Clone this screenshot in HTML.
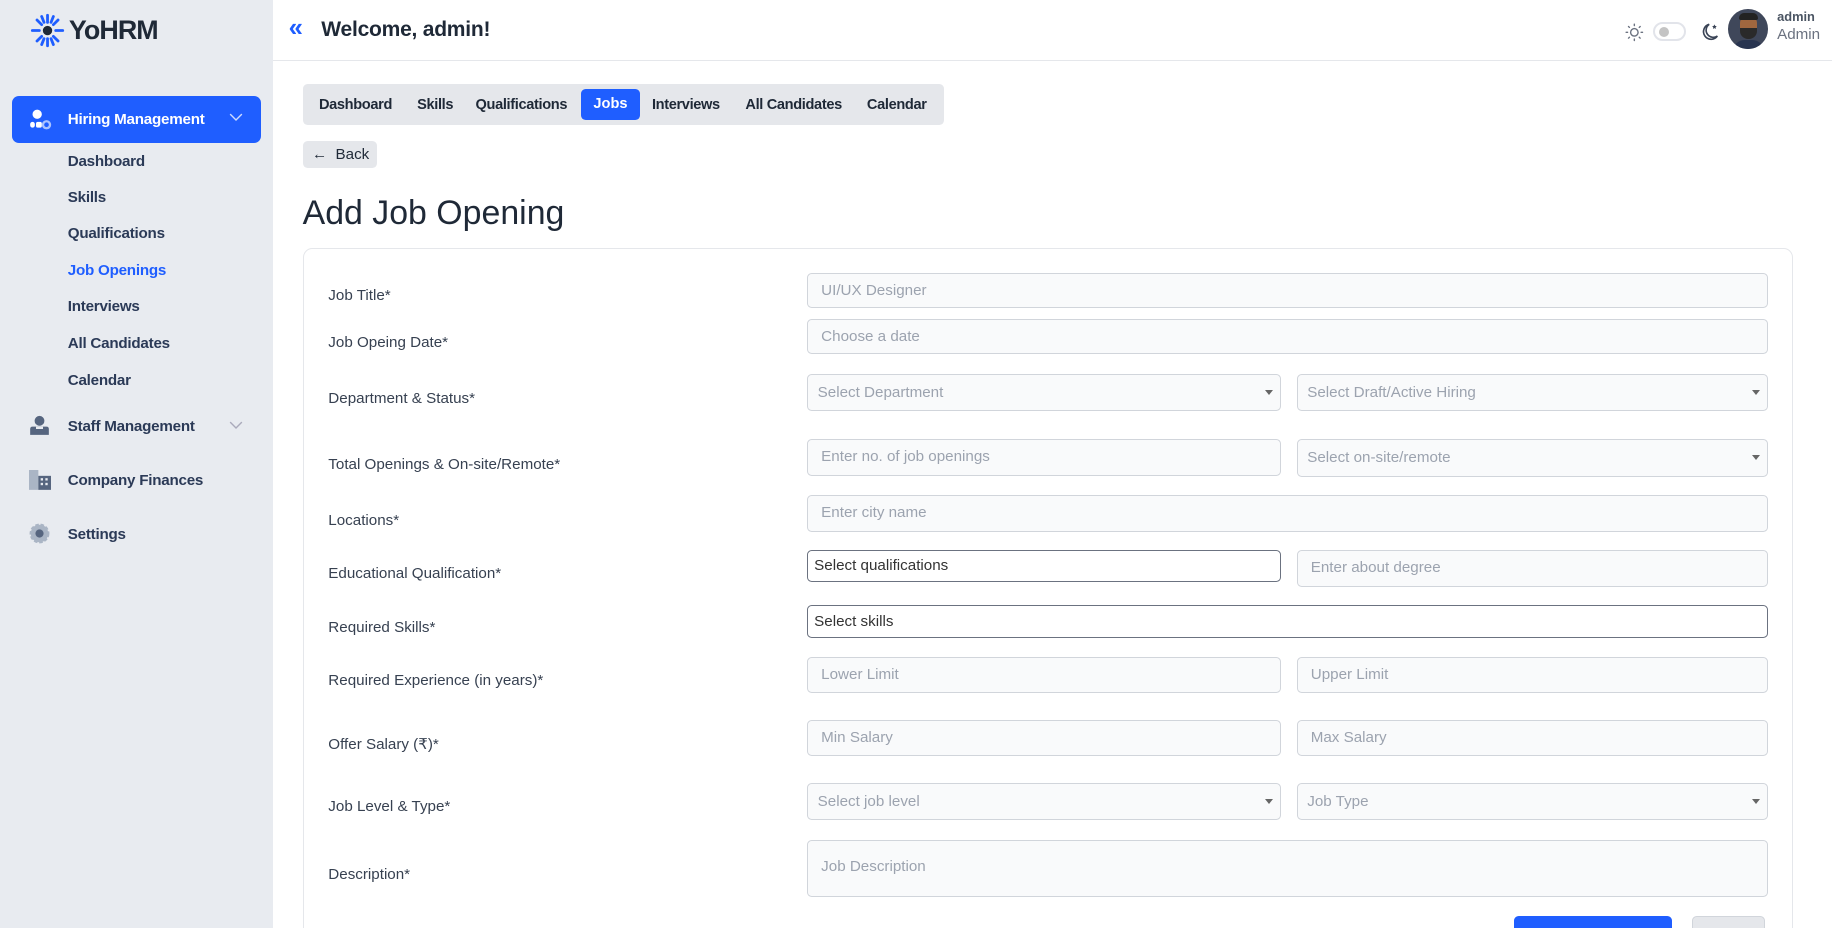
<!DOCTYPE html>
<html><head><meta charset="utf-8"><style>
*{box-sizing:border-box;margin:0;padding:0}
html,body{width:1832px;height:928px;overflow:hidden;background:#fff}
#root{zoom:1.16837;width:1568px;height:794px;position:relative;font-family:"Liberation Sans",sans-serif;color:#1f2937}
.abs{position:absolute}
.side{left:0;top:0;width:234px;height:794px;background:#e8ebf0}
.logo{left:26px;top:11px;display:flex;align-items:center;gap:3px;font-weight:700;font-size:23px;color:#1f2937;letter-spacing:-0.8px}
.hm{left:10px;top:82px;width:213px;height:40px;background:#1f5eff;border-radius:6px;color:#fff;font-size:13px;font-weight:600;letter-spacing:-0.2px}
.sub{left:58px;font-size:13px;font-weight:700;color:#2b3a57;letter-spacing:-0.2px}
.mi{left:58px;font-size:13px;font-weight:700;color:#2b3a57;letter-spacing:-0.2px}
.hdr{left:234px;top:0;width:1334px;height:52px;border-bottom:1px solid #e5e7eb}
.tabs{left:259px;top:72px;width:549px;height:35px;background:#e5e7eb;border-radius:4px}
.tab{top:83px;font-size:12.5px;font-weight:700;color:#1f2937;letter-spacing:-0.3px}
.lbl{left:281px;font-size:13px;color:#374151}
.in{position:absolute;height:30px;background:#f9fafb;border:1px solid #d1d5db;border-radius:4px;font-size:13px;color:#9ca3af;padding-left:11px;line-height:29px}
.sel{padding-left:8px}
.sel:after{content:"";position:absolute;right:6px;top:13px;border-left:4px solid transparent;border-right:4px solid transparent;border-top:5px solid #666}
.L{left:691px;width:405px}.R{left:1110px;width:403px}.F{left:691px;width:822px}
.wh{background:#fff;border-color:#6b7280;color:#333;padding-left:5px;font-size:13px}
</style></head><body><div id="root">
<div class="abs side"></div>
<div class="abs logo"><svg width="30" height="30" viewBox="0 0 30 30"><g stroke="#1f5eff" stroke-width="2.4" stroke-linecap="round"><line x1="15" y1="2" x2="15" y2="8"/><line x1="15" y1="22" x2="15" y2="28"/><line x1="2" y1="15" x2="8" y2="15"/><line x1="22" y1="15" x2="28" y2="15"/><line x1="6" y1="6" x2="10" y2="10"/><line x1="20" y1="20" x2="24" y2="24"/><line x1="24" y1="6" x2="20" y2="10"/><line x1="6" y1="24" x2="10" y2="20"/><line x1="10" y1="3" x2="12" y2="8"/><line x1="20" y1="3" x2="18" y2="8"/><line x1="10" y1="27" x2="12" y2="22"/><line x1="20" y1="27" x2="18" y2="22"/></g><circle cx="15" cy="15" r="4" fill="#1f2937"/></svg><span>YoHRM</span></div>
<div class="abs hm"><svg class="abs" style="left:15px;top:11px" width="20" height="18" viewBox="0 0 20 18"><circle cx="7" cy="4.5" r="4" fill="#fff"/><rect x="1" y="11" width="4" height="5" rx="2" fill="#fff"/><rect x="6" y="11" width="5" height="5" rx="1.5" fill="#fff"/><circle cx="15" cy="13.5" r="3" fill="none" stroke="#a9c2ff" stroke-width="2"/></svg><span class="abs" style="left:48px;top:13px">Hiring Management</span><svg class="abs" style="left:186px;top:15px" width="12" height="8" viewBox="0 0 12 8"><path d="M1 1l5 5 5-5" fill="none" stroke="#cfdcff" stroke-width="1.2"/></svg></div>
<div class="abs sub" style="top:131px">Dashboard</div>
<div class="abs sub" style="top:162px">Skills</div>
<div class="abs sub" style="top:193px">Qualifications</div>
<div class="abs sub" style="top:224px;color:#1f5eff">Job Openings</div>
<div class="abs sub" style="top:255px">Interviews</div>
<div class="abs sub" style="top:287px">All Candidates</div>
<div class="abs sub" style="top:318px">Calendar</div>
<svg class="abs" style="left:25px;top:355px" width="18" height="18" viewBox="0 0 18 18"><circle cx="9" cy="5" r="4.2" fill="#56657f"/><path d="M1 12q0-2 2-2h12q2 0 2 2v5H1z" fill="#56657f"/><path d="M6 10v2h6v-2" fill="#e8ebf0"/></svg>
<div class="abs mi" style="top:358px">Staff Management</div>
<svg class="abs" style="left:196px;top:360px" width="12" height="8" viewBox="0 0 12 8"><path d="M1 1l5 5 5-5" fill="none" stroke="#aab" stroke-width="1.2"/></svg>
<svg class="abs" style="left:25px;top:402px" width="19" height="17" viewBox="0 0 19 17"><rect x="0" y="0" width="8" height="17" fill="#aab5c5"/><rect x="8" y="5" width="11" height="12" fill="#56657f"/><g fill="#e8ebf0"><rect x="10" y="7" width="2" height="2"/><rect x="14" y="7" width="2" height="2"/><rect x="10" y="11" width="2" height="2"/><rect x="14" y="11" width="2" height="2"/></g></svg>
<div class="abs mi" style="top:404px">Company Finances</div>
<svg class="abs" style="left:25px;top:448px" width="18" height="18" viewBox="0 0 18 18"><circle cx="9" cy="9" r="7.5" fill="#aab5c5" stroke="#aab5c5" stroke-width="2" stroke-dasharray="3 1.5"/><circle cx="9" cy="9" r="3.5" fill="#56657f"/></svg>
<div class="abs mi" style="top:450px">Settings</div>

<div class="abs hdr"></div>
<div class="abs" style="left:247px;top:12px;font-size:22px;color:#1f5eff;font-weight:700">«</div>
<div class="abs" style="left:275px;top:15px;font-size:18px;font-weight:700;color:#1f2937;letter-spacing:-0.2px">Welcome, admin!</div>
<svg class="abs" style="left:1391px;top:20px" width="16" height="16" viewBox="0 0 16 16"><circle cx="8" cy="8" r="3.2" fill="none" stroke="#6b7280" stroke-width="1.2"/><g stroke="#6b7280" stroke-width="1.2" stroke-linecap="round"><path d="M8 1v1.2M8 13.8V15M1 8h1.2M13.8 8H15M3 3l.8.8M12.2 12.2l.8.8M13 3l-.8.8M3.8 12.2L3 13"/></g></svg>
<div class="abs" style="left:1415px;top:19px;width:28px;height:16px;border:2px solid #e2e4ea;border-radius:9px;background:#fff"><div style="position:absolute;left:3px;top:2px;width:9px;height:9px;border-radius:50%;background:#c4c4c4"></div></div>
<svg class="abs" style="left:1456px;top:19px" width="16" height="17" viewBox="0 0 16 17"><path d="M7 2A6.5 6.5 0 1 0 14 12 5.5 5.5 0 0 1 7 2z" fill="none" stroke="#3a4456" stroke-width="1.4"/><path d="M11.5 2l.6 1.3 1.4.2-1 1 .3 1.4-1.3-.7-1.3.7.3-1.4-1-1 1.4-.2z" fill="#3a4456"/></svg>
<div class="abs" style="left:1479px;top:8px;width:34px;height:34px;border-radius:50%;background:#3f475a;overflow:hidden"><div style="position:absolute;left:10px;top:5px;width:15px;height:19px;border-radius:7px;background:#a0673f"></div><div style="position:absolute;left:9px;top:3px;width:17px;height:6px;border-radius:5px 5px 2px 2px;background:#222"></div><div style="position:absolute;left:10px;top:16px;width:15px;height:9px;border-radius:0 0 7px 7px;background:#2a2a2a"></div><div style="position:absolute;left:4px;top:26px;width:27px;height:12px;border-radius:10px 10px 0 0;background:#283450"></div></div>
<div class="abs" style="left:1521px;top:8px;font-size:11px;font-weight:700;color:#4b5563">admin</div>
<div class="abs" style="left:1521px;top:22px;font-size:13px;color:#6b7280">Admin</div>

<div class="abs tabs"></div>
<div class="abs tab" style="left:273px">Dashboard</div>
<div class="abs tab" style="left:357px">Skills</div>
<div class="abs tab" style="left:407px">Qualifications</div>
<div class="abs" style="left:497px;top:76px;width:51px;height:27px;background:#1f5eff;border-radius:4px;color:#fff;font-size:12.5px;font-weight:700;text-align:center;line-height:27px">Jobs</div>
<div class="abs tab" style="left:558px">Interviews</div>
<div class="abs tab" style="left:638px">All Candidates</div>
<div class="abs tab" style="left:742px">Calendar</div>

<div class="abs" style="left:259px;top:121px;width:64px;height:23px;background:#e5e7eb;border-radius:4px;font-size:13px;color:#1f2937;line-height:24px;padding-left:8px">←&nbsp; Back</div>
<div class="abs" style="left:259px;top:166px;font-size:29px;color:#1f2937">Add Job Opening</div>
<div class="abs" style="left:259px;top:212px;width:1276px;height:600px;border:1px solid #e5e7eb;border-radius:8px"></div>

<div class="abs lbl" style="top:246px">Job Title*</div>
<div class="in F" style="top:234px">UI/UX Designer</div>
<div class="abs lbl" style="top:286px">Job Opeing Date*</div>
<div class="in F" style="top:273px">Choose a date</div>
<div class="abs lbl" style="top:334px">Department &amp; Status*</div>
<div class="in L sel" style="top:320px;height:32px;line-height:31px">Select Department</div>
<div class="in R sel" style="top:320px;height:32px;line-height:31px">Select Draft/Active Hiring</div>
<div class="abs lbl" style="top:390px">Total Openings &amp; On-site/Remote*</div>
<div class="in L" style="top:376px;height:31px">Enter no. of job openings</div>
<div class="in R sel" style="top:376px;height:32px;line-height:31px">Select on-site/remote</div>
<div class="abs lbl" style="top:438px">Locations*</div>
<div class="in F" style="top:424px;height:31px">Enter city name</div>
<div class="abs lbl" style="top:484px">Educational Qualification*</div>
<div class="in L wh" style="top:471px;height:27px;line-height:26px">Select qualifications</div>
<div class="in R" style="top:471px;height:31px">Enter about degree</div>
<div class="abs lbl" style="top:530px">Required Skills*</div>
<div class="in F wh" style="top:518px;height:28px;line-height:27px">Select skills</div>
<div class="abs lbl" style="top:575px">Required Experience (in years)*</div>
<div class="in L" style="top:562px;height:31px">Lower Limit</div>
<div class="in R" style="top:562px;height:31px">Upper Limit</div>
<div class="abs lbl" style="top:629px">Offer Salary (₹)*</div>
<div class="in L" style="top:616px;height:31px">Min Salary</div>
<div class="in R" style="top:616px;height:31px">Max Salary</div>
<div class="abs lbl" style="top:683px">Job Level &amp; Type*</div>
<div class="in L sel" style="top:670px;height:32px;line-height:31px">Select job level</div>
<div class="in R sel" style="top:670px;height:32px;line-height:31px">Job Type</div>
<div class="abs lbl" style="top:741px">Description*</div>
<div class="in F" style="top:719px;height:49px;line-height:44px">Job Description</div>
<div class="abs" style="left:1296px;top:784px;width:135px;height:20px;background:#1f5eff;border-radius:4px 4px 0 0"></div>
<div class="abs" style="left:1448px;top:784px;width:63px;height:20px;background:#e5e7eb;border:1px solid #d1d5db;border-radius:4px 4px 0 0"></div>
</div></body></html>
